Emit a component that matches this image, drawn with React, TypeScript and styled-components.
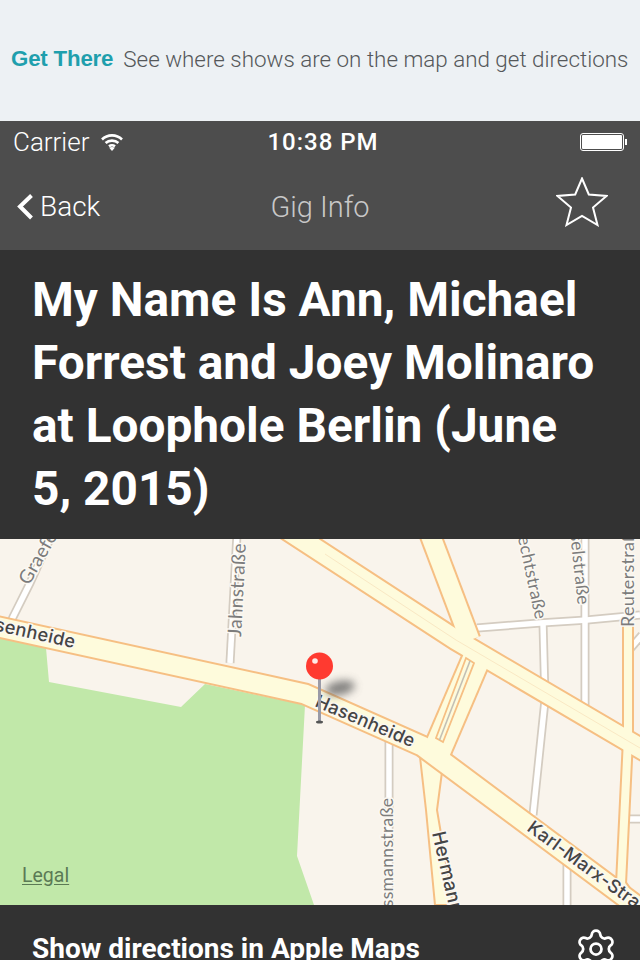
import React from "react";
import styled, { createGlobalStyle } from "styled-components";
import { Settings } from "lucide-react";

const Global = createGlobalStyle`
  html, body { margin: 0; padding: 0; background: #323232; }
  body { overflow: hidden; }
`;

const Page = styled.div`
  width: 640px;
  height: 960px;
  overflow: hidden;
  display: flex;
  flex-direction: column;
  font-family: Roboto, "Liberation Sans", sans-serif;
`;

const Banner = styled.div`
  height: 121px;
  flex: none;
  background: #edf1f4;
  display: flex;
  align-items: center;
  padding: 0 0 3px 11px;
  box-sizing: border-box;
  white-space: nowrap;
`;
const BannerTitle = styled.span`
  font-family: "Liberation Sans", sans-serif;
  font-weight: 700;
  font-size: 22.3px;
  letter-spacing: -0.2px;
  color: #1f9fad;
  margin-right: 10px;
`;
const BannerText = styled.span`
  font-family: Roboto, sans-serif;
  font-weight: 300;
  font-size: 22.4px;
  color: #55585a;
`;

const Header = styled.div`
  flex: none;
  height: 129px;
  background: #4d4d4d;
  display: flex;
  flex-direction: column;
  color: #fff;
`;
const StatusBar = styled.div`
  height: 42px;
  display: grid;
  grid-template-columns: 1fr auto 1fr;
  align-items: center;
  padding: 0 13px;
`;
const Carrier = styled.div`
  display: flex;
  align-items: center;
  gap: 12px;
  font-size: 26px;
  font-weight: 300;
`;
const Clock = styled.div`
  font-size: 24px;
  font-weight: 500;
  letter-spacing: 1px;
  margin-left: 6px;
`;
const BatteryWrap = styled.div`
  justify-self: end;
  display: flex;
`;
const NavBar = styled.div`
  flex: 1;
  display: grid;
  grid-template-columns: 1fr auto 1fr;
  align-items: center;
  padding: 0 17px;
`;
const BackButton = styled.div`
  display: flex;
  align-items: center;
  gap: 7px;
  font-size: 28px;
  font-weight: 300;
`;
const NavTitle = styled.div`
  font-size: 29px;
  font-weight: 300;
  color: #c8c8c8;
`;
const StarWrap = styled.div`
  justify-self: end;
  display: flex;
  margin: -9px 15px 0 0;
`;

const TitleBlock = styled.div`
  flex: none;
  height: 289px;
  box-sizing: border-box;
  background: #323232;
  padding: 19px 32px 0;
`;
const Title = styled.h1`
  margin: 0;
  font-size: 47.8px;
  line-height: 63px;
  font-weight: 700;
  color: #fff;
`;

const MapArea = styled.div`
  position: relative;
  flex: none;
  height: 366px;
  background: #f9f4ec;
  overflow: hidden;
`;
const MapSvg = styled.svg`
  display: block;
  width: 640px;
  height: 366px;
`;
const Legal = styled.span`
  position: absolute;
  left: 22px;
  bottom: 18px;
  font-size: 19.5px;
  color: #5b7a55;
  text-decoration: underline;
  text-underline-offset: 2px;
`;

const Footer = styled.div`
  flex: 1;
  background: #323232;
  display: flex;
  justify-content: space-between;
  align-items: flex-start;
  padding: 27px 22px 0 32px;
`;
const FooterLabel = styled.div`
  font-size: 28px;
  font-weight: 700;
  line-height: 34px;
  color: #fff;
`;
const GearWrap = styled.div`
  display: flex;
  margin-top: -5px;
  color: #fff;
`;

const Casing = styled.path<{ $w: number }>`
  fill: none;
  stroke: #f6bf83;
  stroke-width: ${(p) => p.$w + 4}px;
`;
const Fill = styled.path<{ $w: number }>`
  fill: none;
  stroke: #fefbdc;
  stroke-width: ${(p) => p.$w}px;
`;
const CentreLine = styled.path`
  fill: none;
  stroke: #f9e8c4;
  stroke-width: 1px;
`;
const StreetCase = styled.path`
  fill: none;
  stroke: #d4ccc1;
  stroke-width: 9px;
`;
const StreetFill = styled.path`
  fill: none;
  stroke: #ffffff;
  stroke-width: 5.5px;
`;
const Park = styled.polygon`
  fill: #c1e8a9;
`;
const Label = styled.text<{ $major?: boolean; $size?: number }>`
  font-family: ${(p) => (p.$major ? "Inter" : "Lato")}, "Noto Sans", sans-serif;
  font-size: ${(p) => p.$size ?? 17.5}px;
  font-weight: ${(p) => (p.$major ? 500 : 400)};
  fill: ${(p) => (p.$major ? "#454545" : "#7c7c7c")};
  stroke: #fbf8f2;
  stroke-width: 3px;
  paint-order: stroke;
  letter-spacing: 0.3px;
`;

const streets = [
  "M50 0 L30 44 L13 78 L4 100",
  "M237 -5 L230 124",
  "M477 89 L540 84 L587 81 L640 76",
  "M543 84 L545 161 L533 276",
  "M585 0 L585 166",
  "M389 200 L389 366",
  "M567 320 L567 366",
  "M630 110 L642 96",
  "M628 280 L642 280",
];

const majors: { d: string; w: number }[] = [
  { d: "M-10 86 L305 155 L422 207 L645 373", w: 19 },
  { d: "M255 -30 L456 101 L650 215", w: 19 },
  { d: "M428 -10 L470 101", w: 19 },
  { d: "M478 116 L433 221", w: 27 },
  { d: "M628 85 L628 200 L621 345 L640 372", w: 8 },
];

function MapDrawing() {
  return (
    <MapSvg viewBox="0 0 640 366">
      <defs>
        <filter id="pin-shadow" x="-50%" y="-100%" width="200%" height="300%">
          <feGaussianBlur stdDeviation="4" />
        </filter>
      </defs>
      <Park points="0,98 46,109 49,143 181,168 205,145 305,166 297,317 314,366 0,366" />
      {streets.map((d) => (
        <StreetCase key={"c" + d} d={d} />
      ))}
      {streets.map((d) => (
        <StreetFill key={"f" + d} d={d} />
      ))}
      <polygon
        points="420,218 426,271 435,366 453,366 437,271 442,233"
        fill="#fefbdc"
        stroke="#f6bf83"
        strokeWidth="2"
      />
      {majors.map((r) => (
        <Casing key={"c" + r.d} d={r.d} $w={r.w} />
      ))}
      {majors.map((r) => (
        <Fill key={"f" + r.d} d={r.d} $w={r.w} />
      ))}
      <CentreLine d="M325 15 L456 101 L640 209" />
      <polygon points="466,119 474,124 443,203 436,199" fill="#fefbdc" stroke="#f6bf83" strokeWidth="1.8" />
      <path d="M470 122 L439.5 201" stroke="#c3c0b5" strokeWidth="1.6" fill="none" />

      <Label $major $size={18.2} transform="translate(-30 86) rotate(12.5)">Hasenheide</Label>
      <Label $major $size={18.2} transform="translate(314 167) rotate(23)">Hasenheide</Label>
      <Label $major $size={18.2} transform="translate(526 291) rotate(36)">Karl-Marx-Straße</Label>
      <Label $major $size={18.8} transform="translate(432 294) rotate(77)">Hermannstraße</Label>
      <Label $size={19} transform="translate(29 47) rotate(-60)">Graefestraße</Label>
      <Label $size={19} transform="translate(241 98) rotate(-87)">Jahnstraße</Label>
      <Label transform="translate(511 -34) rotate(78)">Albrechtstraße</Label>
      <Label transform="translate(565 -55) rotate(84)">Weichselstraße</Label>
      <Label $size={18} transform="translate(634 88) rotate(-90)">Reuterstraße</Label>
      <Label transform="translate(393 391) rotate(-90)">Wissmannstraße</Label>

      <ellipse cx="340" cy="149" rx="15" ry="7" fill="#5a5a5a" opacity="0.75" filter="url(#pin-shadow)" transform="rotate(-12 340 149)" />
      <rect x="318" y="138" width="3" height="44" fill="#9a9aa6" />
      <ellipse cx="319.5" cy="183" rx="3.5" ry="1.5" fill="#555" />
      <circle cx="319.5" cy="127" r="13.5" fill="#ff3a30" />
      <circle cx="315" cy="122" r="2.8" fill="#ffe9e6" />
    </MapSvg>
  );
}

export default function App() {
  return (
    <Page>
      <Global />
      <Banner>
        <BannerTitle>Get There</BannerTitle>
        <BannerText>See where shows are on the map and get directions</BannerText>
      </Banner>
      <Header>
        <StatusBar>
          <Carrier>
            Carrier
            <svg width="22" height="18" viewBox="0 0 22 18" fill="none" stroke="#fff" strokeWidth="2.6">
              <path d="M1 6.5 C6.5 1 15.5 1 21 6.5" />
              <path d="M4.6 10 C8 6.8 14 6.8 17.4 10" />
              <path d="M8 13.4 C9.8 12 12.2 12 14 13.4" />
              <path d="M11 18 L8.2 14.8 C9.8 13.6 12.2 13.6 13.8 14.8 Z" fill="#fff" stroke="none" />
            </svg>
          </Carrier>
          <Clock>10:38 PM</Clock>
          <BatteryWrap>
            <svg width="47" height="19" viewBox="0 0 47 19">
              <rect x="0.5" y="0.5" width="43" height="17" rx="2.5" fill="none" stroke="#fff" />
              <rect x="2" y="2" width="40" height="14" rx="1" fill="#fff" />
              <rect x="45" y="6" width="2" height="6" fill="#fff" />
            </svg>
          </BatteryWrap>
        </StatusBar>
        <NavBar>
          <BackButton>
            <svg width="16" height="26" viewBox="0 0 16 26" fill="none" stroke="#fff" strokeWidth="4">
              <path d="M14.5 1.5 L3 12.5 L14.5 24" />
            </svg>
            Back
          </BackButton>
          <NavTitle>Gig Info</NavTitle>
          <StarWrap>
            <svg width="52" height="50" viewBox="0 0 52 50" fill="none" stroke="#fff" strokeWidth="2">
              <path d="M26 1.5 L32.8 17.5 L50.5 19 L37 30.5 L41.5 48 L26 39 L10.5 48 L15 30.5 L1.5 19 L19.2 17.5 Z" />
            </svg>
          </StarWrap>
        </NavBar>
      </Header>
      <TitleBlock>
        <Title>My Name Is Ann, Michael Forrest and Joey Molinaro at Loophole Berlin (June 5, 2015)</Title>
      </TitleBlock>
      <MapArea>
        <MapDrawing />
        <Legal>Legal</Legal>
      </MapArea>
      <Footer>
        <FooterLabel>Show directions in Apple Maps</FooterLabel>
        <GearWrap>
          <Settings size={44} strokeWidth={1.5} />
        </GearWrap>
      </Footer>
    </Page>
  );
}
